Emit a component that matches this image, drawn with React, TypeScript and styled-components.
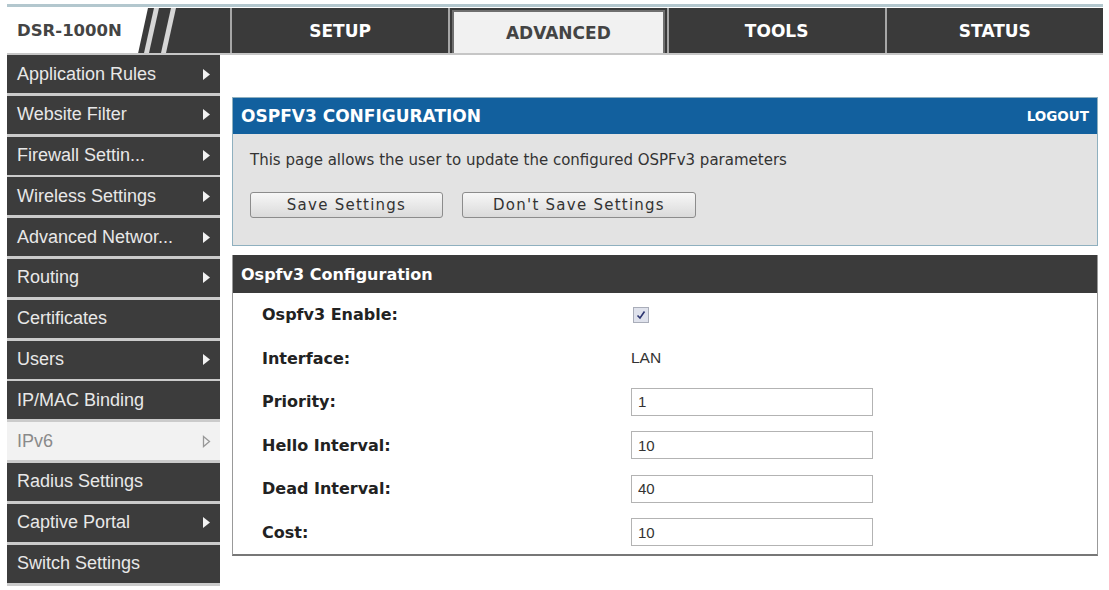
import React from 'react';
import styled, { createGlobalStyle } from 'styled-components';

const GlobalStyle = createGlobalStyle`
  html, body {
    margin: 0;
    padding: 0;
    background: #ffffff;
  }
  body {
    font-family: 'DejaVu Sans', Verdana, sans-serif;
  }
`;

const Page = styled.div`
  width: 1096px;
  padding: 4px 0 0 7px;
`;

const TopRule = styled.div`
  height: 3px;
  background: #b3c7ce;
  margin-bottom: 1px;
`;

const Header = styled.div`
  display: grid;
  grid-template-columns: 223px repeat(4, 1fr);
  height: 45px;
  background: #3a3a3a;
  border-bottom: 2px solid #c6c6c6;
`;

const LogoCell = styled.div`
  display: flex;
  align-items: stretch;
`;

const LogoPlate = styled.div`
  width: 141px;
  display: flex;
  align-items: center;
  padding-left: 10px;
  box-sizing: border-box;
  background: #ffffff;
  clip-path: polygon(0 0, 100% 0, 93% 100%, 0 100%);
  color: #444;
  font-weight: bold;
  font-size: 16.5px;
`;

const Slashes = styled.svg`
  width: 40px;
  height: 45px;
  margin-left: -4px;
`;

const Tab = styled.div<{ $active?: boolean }>`
  display: flex;
  align-items: center;
  justify-content: center;
  border-left: 2px solid #a6a6a6;
  color: #fff;
  font-weight: bold;
  font-size: 17px;
  padding: ${(p) => (p.$active ? '2px 2px 0' : '0')};
`;

const ActiveBox = styled.div`
  flex: 1;
  align-self: stretch;
  display: flex;
  align-items: center;
  justify-content: center;
  background: #f1f1f1;
  border: 2px solid #6f6f6f;
  border-bottom: none;
  color: #444;
`;

const Main = styled.div`
  display: flex;
  gap: 12px;
  align-items: flex-start;
`;

const Sidebar = styled.nav`
  width: 213px;
  display: flex;
  flex-direction: column;
  gap: 2.8px;
  background: #cbcbcb;
  padding-bottom: 3px;
`;

const NavItem = styled.div<{ $current?: boolean }>`
  height: 38px;
  display: flex;
  align-items: center;
  justify-content: space-between;
  padding: 0 9px 0 10px;
  background: ${(p) => (p.$current ? '#f2f2f2' : '#3c3c3c')};
  color: ${(p) => (p.$current ? '#8a8a8a' : '#e8e8e8')};
  font-family: 'Liberation Sans', Arial, sans-serif;
  font-size: 18px;
`;

const Content = styled.div`
  width: 866px;
  padding-top: 42px;
`;

const InfoPanel = styled.section`
  border: 1px solid #8fb0bf;
  background: #e3e3e3;
`;

const PanelHead = styled.div`
  height: 36px;
  display: flex;
  align-items: center;
  justify-content: space-between;
  padding: 0 8px;
  background: #12609e;
  color: #fff;
  font-weight: bold;
`;

const PanelTitle = styled.span`
  font-size: 17px;
`;

const Logout = styled.span`
  font-size: 13.5px;
`;

const PanelBody = styled.div`
  padding: 17px 17px 27px;
`;

const Description = styled.p`
  margin: 0 0 23px;
  font-size: 15px;
  line-height: 18px;
  color: #333;
`;

const ButtonRow = styled.div`
  display: flex;
  gap: 19px;
`;

const Button = styled.button<{ $w: number }>`
  width: ${(p) => p.$w}px;
  height: 26px;
  border: 1px solid #8c8c8c;
  border-radius: 3px;
  background: linear-gradient(#f7f7f7, #dadada);
  color: #333;
  font-family: 'DejaVu Sans', Verdana, sans-serif;
  font-size: 15px;
  letter-spacing: 1.25px;
  padding: 0;
`;

const FormPanel = styled.section`
  margin-top: 9px;
  border-left: 1px solid #999;
  border-right: 1px solid #999;
  border-bottom: 2px solid #777;
`;

const FormHead = styled.div`
  height: 38px;
  display: flex;
  align-items: center;
  padding: 0 8px;
  background: #3b3b3b;
  color: #fff;
  font-weight: bold;
  font-size: 16px;
`;

const FormGrid = styled.div`
  display: grid;
  grid-template-columns: 369px 1fr;
  grid-auto-rows: 43.5px;
  align-items: center;
  padding-left: 29px;
`;

const Label = styled.div`
  font-weight: bold;
  font-size: 16px;
  color: #222;
`;

const Value = styled.div`
  font-family: 'Liberation Sans', Arial, sans-serif;
  font-size: 15.5px;
  color: #333;
`;

const Field = styled.input`
  width: 242px;
  height: 28px;
  box-sizing: border-box;
  border: 1px solid #b3b3b3;
  padding: 0 6px;
  font-family: 'Liberation Sans', Arial, sans-serif;
  font-size: 15px;
  color: #333;
  background: #fff;
  outline: none;
`;

const CheckBox = styled.span`
  display: inline-flex;
  align-items: center;
  justify-content: center;
  width: 14px;
  height: 14px;
  margin-left: 2px;
  border: 1px solid #a9adb9;
  background: #dfe2ec;
`;

const Arrow: React.FC<{ hollow?: boolean }> = ({ hollow }) => (
  <svg width="9" height="13" viewBox="0 0 9 13">
    {hollow ? (
      <path d="M1.5 1.5 L7.5 6.5 L1.5 11.5 Z" fill="none" stroke="#999" strokeWidth="1.3" />
    ) : (
      <path d="M1 1 L8 6.5 L1 12 Z" fill="#f2f2f2" />
    )}
  </svg>
);

const menu: { label: string; arrow?: boolean; current?: boolean }[] = [
  { label: 'Application Rules', arrow: true },
  { label: 'Website Filter', arrow: true },
  { label: 'Firewall Settin...', arrow: true },
  { label: 'Wireless Settings', arrow: true },
  { label: 'Advanced Networ...', arrow: true },
  { label: 'Routing', arrow: true },
  { label: 'Certificates' },
  { label: 'Users', arrow: true },
  { label: 'IP/MAC Binding' },
  { label: 'IPv6', arrow: true, current: true },
  { label: 'Radius Settings' },
  { label: 'Captive Portal', arrow: true },
  { label: 'Switch Settings' },
];

const fields = [
  { label: 'Priority:', value: '1' },
  { label: 'Hello Interval:', value: '10' },
  { label: 'Dead Interval:', value: '40' },
  { label: 'Cost:', value: '10' },
];

export default function App() {
  return (
    <Page>
      <GlobalStyle />
      <TopRule />
      <Header>
        <LogoCell>
          <LogoPlate>DSR-1000N</LogoPlate>
          <Slashes viewBox="0 0 40 45">
            <polygon points="10,0 15,0 5,45 0,45" fill="#d6d6d6" />
            <polygon points="27,0 32,0 22,45 17,45" fill="#d6d6d6" />
          </Slashes>
        </LogoCell>
        <Tab>SETUP</Tab>
        <Tab $active>
          <ActiveBox>ADVANCED</ActiveBox>
        </Tab>
        <Tab>TOOLS</Tab>
        <Tab>STATUS</Tab>
      </Header>
      <Main>
        <Sidebar>
          {menu.map((m) => (
            <NavItem key={m.label} $current={m.current}>
              <span>{m.label}</span>
              {m.arrow && <Arrow hollow={m.current} />}
            </NavItem>
          ))}
        </Sidebar>
        <Content>
          <InfoPanel>
            <PanelHead>
              <PanelTitle>OSPFV3 CONFIGURATION</PanelTitle>
              <Logout>LOGOUT</Logout>
            </PanelHead>
            <PanelBody>
              <Description>
                This page allows the user to update the configured OSPFv3 parameters
              </Description>
              <ButtonRow>
                <Button $w={193}>Save Settings</Button>
                <Button $w={234}>Don't Save Settings</Button>
              </ButtonRow>
            </PanelBody>
          </InfoPanel>
          <FormPanel>
            <FormHead>Ospfv3 Configuration</FormHead>
            <FormGrid>
              <Label>Ospfv3 Enable:</Label>
              <div>
                <CheckBox>
                  <svg width="10" height="10" viewBox="0 0 10 10">
                    <path d="M1.5 5.5 L4 8 L8.5 1.5" fill="none" stroke="#2c3570" strokeWidth="1.6" />
                  </svg>
                </CheckBox>
              </div>
              <Label>Interface:</Label>
              <Value>LAN</Value>
              {fields.map((f) => (
                <React.Fragment key={f.label}>
                  <Label>{f.label}</Label>
                  <div>
                    <Field defaultValue={f.value} readOnly />
                  </div>
                </React.Fragment>
              ))}
            </FormGrid>
          </FormPanel>
        </Content>
      </Main>
    </Page>
  );
}
